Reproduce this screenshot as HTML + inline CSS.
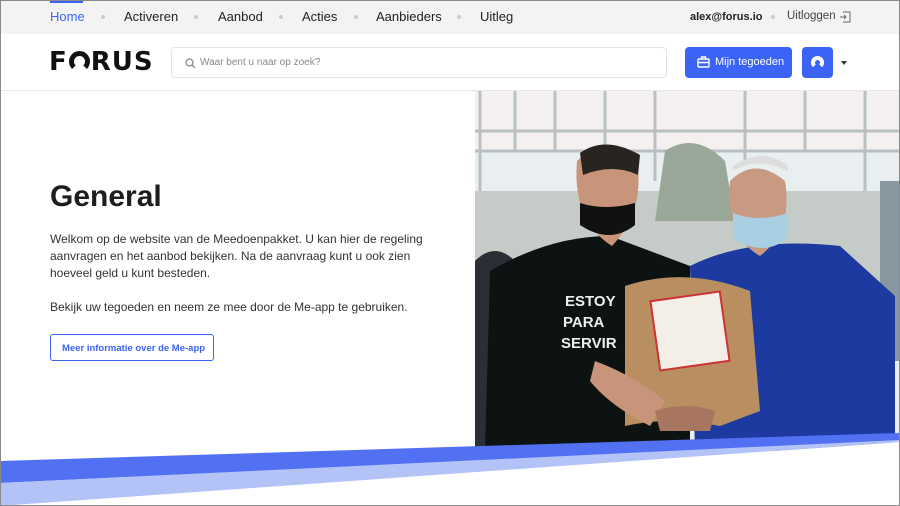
<!DOCTYPE html>
<html><head><meta charset="utf-8"><style>
*{margin:0;padding:0;box-sizing:border-box}
body{width:900px;height:506px;overflow:hidden;font-family:"Liberation Sans",sans-serif;background:#fff;position:relative}
.frame{position:absolute;inset:0;border:1px solid #8a8a8a;z-index:50;pointer-events:none}
.top{position:absolute;top:0;left:0;width:900px;height:34px;background:#f3f3f4}
.top span{position:absolute;top:9px;font-size:13px;color:#222}
.dot{position:absolute;top:15px;width:4px;height:4px;border-radius:2px;background:#ccc}
.hdr{position:absolute;top:34px;left:0;width:900px;height:57px;background:#fff;border-bottom:1px solid #e6e6e6}
.p{position:absolute;left:50px;font-size:12px;color:#333;line-height:17px}
</style></head><body>
<div class="top">
<div style="position:absolute;left:50px;top:0;width:33px;height:3px;background:#3b63f6"></div>
<span style="left:50px;color:#3b63f6">Home</span><div class="dot" style="left:101px"></div>
<span style="left:124px">Activeren</span><div class="dot" style="left:194px"></div>
<span style="left:218px">Aanbod</span><div class="dot" style="left:279px"></div>
<span style="left:302px">Acties</span><div class="dot" style="left:354px"></div>
<span style="left:376px">Aanbieders</span><div class="dot" style="left:457px"></div>
<span style="left:480px">Uitleg</span>
<span style="left:690px;font-weight:bold;font-size:11px;top:11px">alex@forus.io</span><div class="dot" style="left:771px"></div>
<span style="left:787px;font-size:11.5px;top:10px;color:#444">Uitloggen</span>
<svg style="position:absolute;left:839px;top:11px" width="12" height="12" viewBox="0 0 12 12" fill="none" stroke="#666" stroke-width="1"><path d="M4 1h7v10H4M1 6h6M5 4l2 2-2 2"/></svg>
</div>
<div class="hdr">
<div style="position:absolute;left:49px;top:13px;font-size:26px;font-weight:900;letter-spacing:1px;color:#111;font-family:'DejaVu Sans',sans-serif;line-height:30px">F<span style="display:inline-block;width:21px;height:21px;border:5px solid #111;border-bottom-color:transparent;border-radius:50%;vertical-align:-2px;margin:0 1px"></span>RUS</div>
<div style="position:absolute;left:171px;top:13px;width:496px;height:31px;border:1px solid #e2e2e2;border-radius:4px">
<svg style="position:absolute;left:13px;top:10px" width="11" height="11" viewBox="0 0 11 11" fill="none" stroke="#888" stroke-width="1.3"><circle cx="4.5" cy="4.5" r="3.5"/><path d="M7 7l3 3"/></svg>
<span style="position:absolute;left:28px;top:9px;font-size:10px;color:#888">Waar bent u naar op zoek?</span></div>
<div style="position:absolute;left:685px;top:13px;width:107px;height:31px;background:#3b63f6;border-radius:4px;color:#fff;font-size:11px">
<svg style="position:absolute;left:12px;top:9px" width="13" height="12" viewBox="0 0 13 12" fill="none" stroke="#fff" stroke-width="1.4"><rect x="1" y="3" width="11" height="8" rx="1"/><path d="M4.5 3V1h4v2M1 6.5h11"/></svg>
<span style="position:absolute;left:30px;top:9px">Mijn tegoeden</span></div>
<div style="position:absolute;left:802px;top:13px;width:31px;height:31px;background:#3b63f6;border-radius:4px">
<div style="position:absolute;left:9px;top:9px;width:13px;height:13px;border:4px solid #fff;border-bottom-color:transparent;border-radius:50%"></div></div>
<div style="position:absolute;left:841px;top:27px;border:3px solid transparent;border-top:4px solid #333"></div>
</div>
<div style="position:absolute;left:50px;top:180px;font-size:30px;font-weight:bold;color:#1d1d1d">General</div>
<div class="p" style="top:231px">Welkom op de website van de Meedoenpakket. U kan hier de regeling<br>aanvragen en het aanbod bekijken. Na de aanvraag kunt u ook zien<br>hoeveel geld u kunt besteden.</div>
<div class="p" style="top:299px">Bekijk uw tegoeden en neem ze mee door de Me-app te gebruiken.</div>
<div style="position:absolute;left:50px;top:334px;width:164px;height:27px;border:1px solid #3b63f6;border-radius:3px;font-size:9.5px;font-weight:bold;color:#3b63f6;padding:8px 0 0 11px">Meer informatie over de Me-app</div>
<svg style="position:absolute;left:475px;top:91px" width="425" height="360" viewBox="0 0 425 360">
<rect width="425" height="360" fill="#e9eef0"/>
<rect y="0" width="425" height="60" fill="#f4f0f0"/>
<g stroke="#b8c0c4" stroke-width="3"><path d="M5 0v180M40 0v60M80 0v60M130 0v60M180 0v90M270 0v70M330 0v60M390 0v200M0 60h425M0 40h425"/></g>
<rect x="0" y="100" width="425" height="120" fill="#c5ccc8"/>
<path d="M190 60q30-20 60 10l10 60h-80z" fill="#9aa89a"/>
<rect x="405" y="90" width="20" height="180" fill="#8897a0"/>
<path d="M0 170q20-20 40 0v190H0z" fill="#2a2f36"/>
<path d="M15 180q60-35 120-35l80 30v185H10z" fill="#0d1212"/>
<path d="M102 70q25-25 60 0 8 50-25 85-40-25-35-85z" fill="#c8957a"/>
<path d="M105 62q25-18 60 2l-2 20q-25-12-55 0z" fill="#2a2420"/>
<path d="M105 112q25 8 55 0v22q-25 20-55 0z" fill="#111"/>
<path d="M215 175q60-30 150-20l55 50v155H220z" fill="#1d3aa0"/>
<path d="M255 90q25-25 55 0 8 50-25 75-35-20-30-75z" fill="#c89a82"/>
<path d="M258 80q25-15 55 0v-5q-25-20-55 0z" fill="#ddd"/>
<path d="M258 122q25 10 55 0v25q-25 20-55 0z" fill="#a9cfe2"/>
<path d="M150 195q60-20 125 5l10 120-40 15q-50-10-95 0z" fill="#b98f62"/>
<rect x="180" y="205" width="70" height="70" fill="#f3efe6" stroke="#c33" stroke-width="2" transform="rotate(-8 215 240)"/>
<text x="90" y="215" fill="#eee" font-size="15" font-weight="bold" font-family="Liberation Sans">ESTOY</text>
<text x="88" y="236" fill="#eee" font-size="15" font-weight="bold" font-family="Liberation Sans">PARA</text>
<text x="86" y="257" fill="#eee" font-size="15" font-weight="bold" font-family="Liberation Sans">SERVIR</text>
<path d="M120 270q40 15 70 40l-15 25q-40-20-60-45z" fill="#c8957a"/>
<path d="M180 320q30-10 60 0l-5 20h-50z" fill="#a8755f"/>
</svg>
<svg style="position:absolute;left:0;top:430px" width="900" height="76" viewBox="0 0 900 76">
<polygon points="0,31 900,3 900,11 0,53" fill="#5271f2"/>
<polygon points="0,53 900,10 900,12 0,76" fill="#b3c3f8"/>
<polygon points="0,76 900,12 900,76" fill="#fff"/>
</svg>
<div class="frame"></div>
</body></html>
